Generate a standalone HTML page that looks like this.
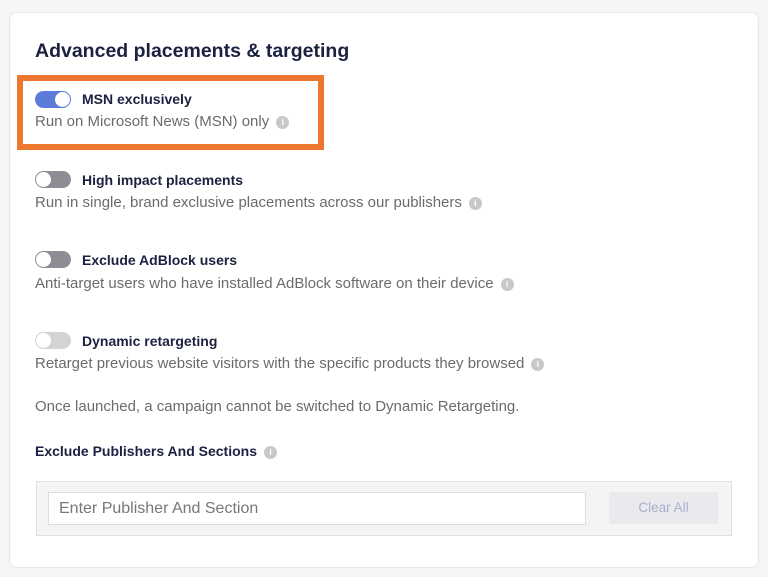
<!DOCTYPE html>
<html><head><style>
body{margin:0;width:768px;height:577px;background:#f5f5f5;font-family:"Liberation Sans",sans-serif;position:relative;overflow:hidden}
.card{position:absolute;left:9px;top:12px;width:748px;height:554px;background:#fff;border:1px solid #e8e8e8;border-radius:8px}
.a{position:absolute;white-space:nowrap}
h1{position:absolute;left:35px;top:40px;margin:0;font-size:19.5px;font-weight:bold;color:#1b2140;letter-spacing:0px}
.box{position:absolute;left:17px;top:75px;width:295px;height:63px;border:6px solid #ee7730}
.tg{position:absolute;left:35px;width:36px;height:17px;border-radius:9px;background:#8d8d93}
.tg::after{content:"";position:absolute;left:1px;top:1px;width:15px;height:15px;border-radius:50%;background:#fff}
.tg.on{background:#5d7bd9}.tg.on::after{left:20px}
.tg.dis{background:#d3d3d6}
.t{left:82px;font-size:14px;font-weight:bold;color:#1b2140}
.d{left:35px;font-size:15px;color:#6b6b6b}
.i{display:inline-block;width:13px;height:13px;border-radius:50%;background:#c8c8c8;color:#fff;font-size:9px;text-align:center;line-height:13px;vertical-align:1px;margin-left:7px;font-weight:bold}
.wrap{position:absolute;left:36px;top:481px;width:694px;height:53px;background:#f4f4f4;border:1px solid #e2e2e2}
.inp{position:absolute;left:48px;top:492px;background:#fff;border:1px solid #ddd;font-size:16px;color:#777;line-height:31px;padding-left:10px;box-sizing:border-box;width:538px;height:33px}
.btn{position:absolute;left:609px;top:492px;width:109px;height:32px;background:#eaeaee;border-radius:3px;color:#a8afcf;font-size:13.5px;text-align:center;line-height:32px}
</style></head><body>
<div class="card"></div>
<h1>Advanced placements &amp; targeting</h1>
<div class="box"></div>
<div class="tg on" style="top:91px"></div>
<div class="a t" style="top:91px">MSN exclusively</div>
<div class="a d" style="top:113px">Run on Microsoft News (MSN) only<span class="i">i</span></div>
<div class="tg" style="top:171px"></div>
<div class="a t" style="top:172px">High impact placements</div>
<div class="a d" style="top:194px">Run in single, brand exclusive placements across our publishers<span class="i">i</span></div>
<div class="tg" style="top:251px"></div>
<div class="a t" style="top:252px">Exclude AdBlock users</div>
<div class="a d" style="top:275px">Anti-target users who have installed AdBlock software on their device<span class="i">i</span></div>
<div class="tg dis" style="top:332px"></div>
<div class="a t" style="top:333px">Dynamic retargeting</div>
<div class="a d" style="top:355px">Retarget previous website visitors with the specific products they browsed<span class="i">i</span></div>
<div class="a d" style="top:398px">Once launched, a campaign cannot be switched to Dynamic Retargeting.</div>
<div class="a" style="left:35px;top:443px;font-size:14px;font-weight:bold;color:#1b2140">Exclude Publishers And Sections<span class="i">i</span></div>
<div class="wrap"></div>
<div class="inp">Enter Publisher And Section</div>
<div class="btn">Clear All</div>
</body></html>
